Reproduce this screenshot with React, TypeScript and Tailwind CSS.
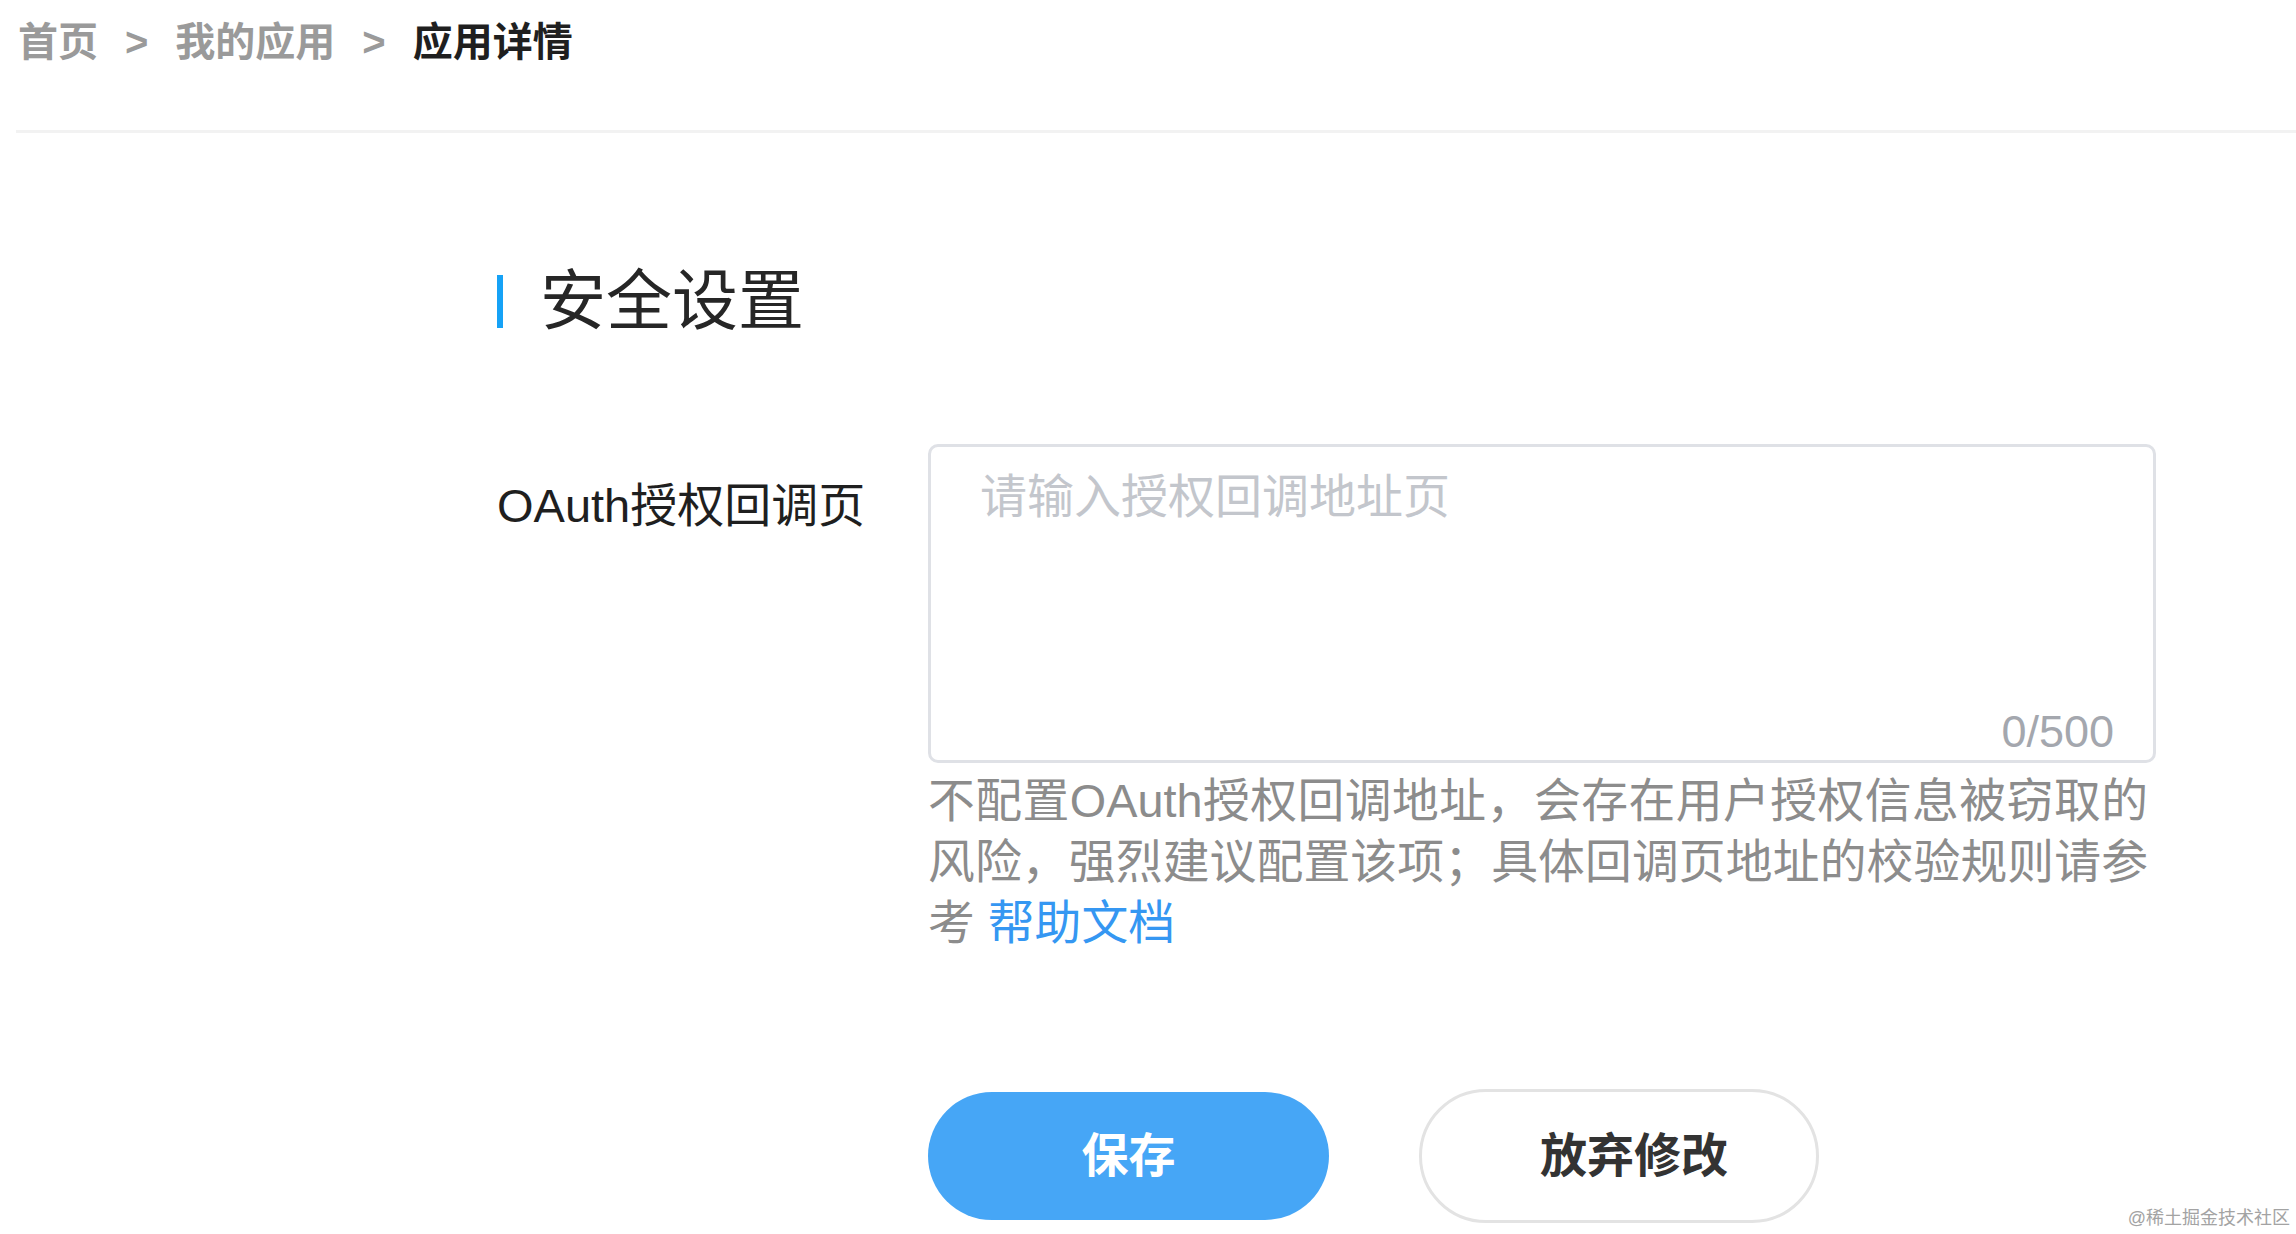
import { useState } from "react";

const SecuritySettings = () => {
  const [callback, setCallback] = useState("");

  return (
    <div className="relative h-screen w-full overflow-hidden bg-white [font-family:'Liberation_Sans','Noto_Sans_CJK_SC',sans-serif]">
      {/* breadcrumb */}
      <div className="ml-[16px] h-[133px] border-b-[3px] border-[#f2f2f2]">
        <nav className="flex items-start gap-[27px] pl-[2px] pt-[20px] text-[40px] leading-[44px] font-bold">
          <span className="text-[#9a9a9a]">首页</span>
          <span className="text-[#9a9a9a]">&gt;</span>
          <span className="text-[#9a9a9a]">我的应用</span>
          <span className="text-[#9a9a9a]">&gt;</span>
          <span className="text-[#1f1f1f]">应用详情</span>
        </nav>
      </div>

      <main className="pl-[497px]">
        <div className="mt-[128px] flex items-center gap-[37px]">
          <div className="h-[53px] w-[6px] bg-[#16a2f6]" />
          <h1 className="text-[66px] leading-[80px] font-normal text-[#262626]">安全设置</h1>
        </div>

        <div className="mt-[103px] flex">
          <label className="mt-[31px] w-[431px] shrink-0 text-[47px] leading-[61px] text-[#1f1f1f]">
            OAuth授权回调页
          </label>

          <div className="flex flex-col">
            <div className="relative w-[1228px]">
              <textarea
                value={callback}
                maxLength={500}
                onChange={(e) => setCallback(e.target.value)}
                placeholder="请输入授权回调地址页"
                className="block h-[319px] w-full resize-none rounded-[10px] border-[3px] border-[#dfe1e6] bg-white pl-[49px] pr-[40px] pt-[19px] text-[47px] leading-[61px] text-[#333] outline-none placeholder:text-[#c3c6cc]"
              />
              <span className="absolute bottom-[9px] right-[42px] text-[45px] leading-[45px] text-[#a4a7ae]">
                {callback.length}/500
              </span>
            </div>

            {/* help text, lines broken as in the design */}
            <div className="mt-[8px] w-[1220px] text-[46.8px] leading-[61px] text-[#8c8c8c]">
              <p className="whitespace-nowrap text-justify [text-align-last:justify]">
                不配置OAuth授权回调地址，会存在用户授权信息被窃取的
              </p>
              <p className="whitespace-nowrap text-justify [text-align-last:justify]">
                风险，强烈建议配置该项；具体回调页地址的校验规则请参
              </p>
              <p className="whitespace-nowrap">
                考 <a className="text-[#3597f2]">帮助文档</a>
              </p>
            </div>

            <div className="mt-[135px] flex items-center gap-[90px]">
              <button className="h-[128px] w-[401px] rounded-full bg-[#46a6f6] text-[47px] font-bold text-white">
                保存
              </button>
              <button className="h-[134px] w-[400px] rounded-full border-[3px] border-[#e3e3e3] bg-white pl-[30px] text-[47px] font-bold text-[#333]">
                放弃修改
              </button>
            </div>
          </div>
        </div>
      </main>

      <span className="absolute bottom-[6px] right-[6px] text-[18px] leading-[20px] text-[#a3a3a3]">
        @稀土掘金技术社区
      </span>
    </div>
  );
};

export default function App() {
  return <SecuritySettings />;
}
